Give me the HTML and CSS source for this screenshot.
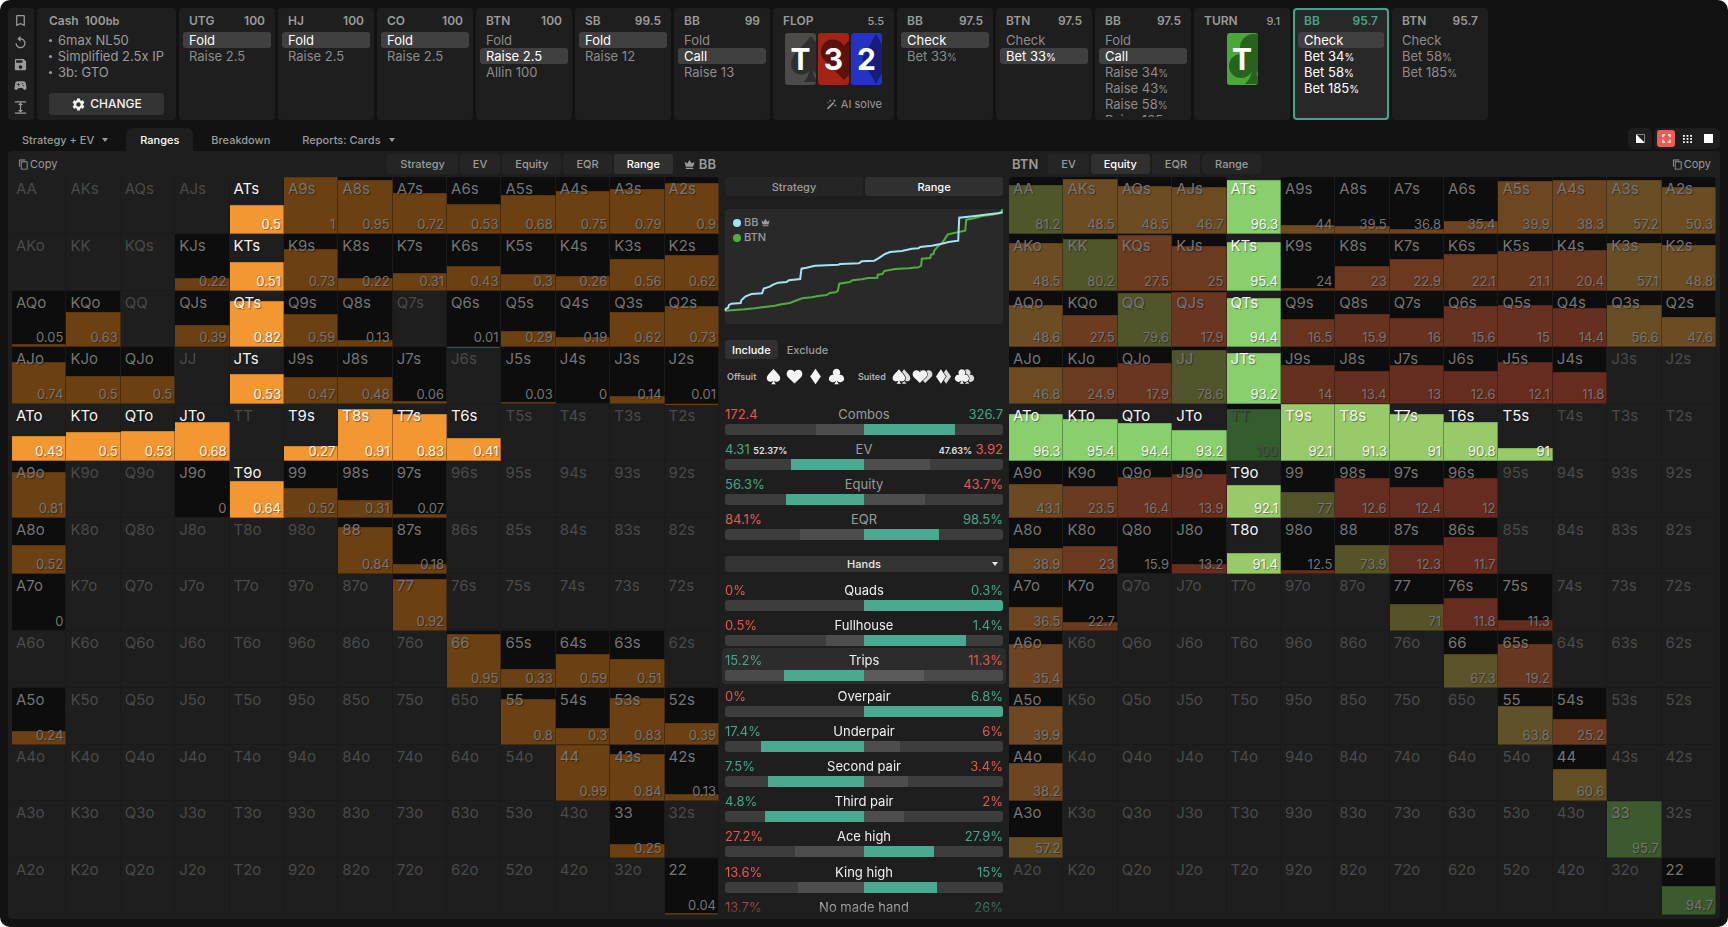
FILE: index.html
```html
<!DOCTYPE html>
<html lang="en">
<head>
<meta charset="utf-8">
<title>Range explorer</title>
<meta name="viewport" content="width=device-width, initial-scale=1">
<link rel="stylesheet" href="styles.css">
</head>
<body>
<svg class="sprite" aria-hidden="true">
  <symbol id="i-bookmark" viewBox="0 0 24 24"><path d="M17 3H7c-1.1 0-2 .9-2 2v16l7-3 7 3V5c0-1.1-.9-2-2-2zm0 15-5-2.18L7 18V5h10v13z"/></symbol>
  <symbol id="i-replay" viewBox="0 0 24 24"><path d="M12 5V1L7 6l5 5V7c3.31 0 6 2.69 6 6s-2.69 6-6 6-6-2.69-6-6H4c0 4.42 3.58 8 8 8s8-3.58 8-8-3.58-8-8-8z"/></symbol>
  <symbol id="i-save" viewBox="0 0 24 24"><path d="M17 3H5c-1.11 0-2 .9-2 2v14c0 1.1.89 2 2 2h14c1.1 0 2-.9 2-2V7l-4-4zm-5 16c-1.66 0-3-1.34-3-3s1.34-3 3-3 3 1.34 3 3-1.34 3-3 3zm3-10H5V5h10v4z"/></symbol>
  <symbol id="i-gamepad" viewBox="0 0 24 24"><path d="M21.58 16.09l-1.09-7.66C20.21 6.46 18.52 5 16.53 5H7.47C5.48 5 3.79 6.46 3.51 8.43l-1.09 7.66C2.2 17.63 3.39 19 4.94 19c.68 0 1.32-.27 1.8-.75L9 16h6l2.25 2.25c.48.48 1.13.75 1.8.75 1.56 0 2.75-1.37 2.53-2.91zM11 11H9v2H8v-2H6v-1h2V8h1v2h2v1zm4-1c-.55 0-1-.45-1-1s.45-1 1-1 1 .45 1 1-.45 1-1 1zm2 3c-.55 0-1-.45-1-1s.45-1 1-1 1 .45 1 1-.45 1-1 1z"/></symbol>
  <symbol id="i-expand" viewBox="0 0 24 24"><path d="M3 20h18v2H3zM3 2h18v2H3zm10 6h3l-4-4-4 4h3v8H8l4 4 4-4h-3z"/></symbol>
  <symbol id="i-gear" viewBox="0 0 24 24"><path d="M19.14 12.94c.04-.3.06-.61.06-.94 0-.32-.02-.64-.07-.94l2.03-1.58c.18-.14.23-.41.12-.61l-1.92-3.32c-.12-.22-.37-.29-.59-.22l-2.39.96c-.5-.38-1.03-.7-1.62-.94l-.36-2.54c-.04-.24-.24-.41-.48-.41h-3.84c-.24 0-.43.17-.47.41l-.36 2.54c-.59.24-1.13.57-1.62.94l-2.39-.96c-.22-.08-.47 0-.59.22L2.74 8.87c-.12.21-.08.47.12.61l2.03 1.58c-.05.3-.09.63-.09.94s.02.64.07.94l-2.03 1.58c-.18.14-.23.41-.12.61l1.92 3.32c.12.22.37.29.59.22l2.39-.96c.5.38 1.03.7 1.62.94l.36 2.54c.05.24.24.41.48.41h3.84c.24 0 .44-.17.47-.41l.36-2.54c.59-.24 1.13-.56 1.62-.94l2.39.96c.22.08.47 0 .59-.22l1.92-3.32c.12-.22.07-.47-.12-.61l-2.01-1.58zM12 15.6c-1.98 0-3.6-1.62-3.6-3.6s1.62-3.6 3.6-3.6 3.6 1.62 3.6 3.6-1.62 3.6-3.6 3.6z"/></symbol>
  <symbol id="i-copy" viewBox="0 0 24 24"><path d="M16 1H4c-1.1 0-2 .9-2 2v14h2V3h12V1zm3 4H8c-1.1 0-2 .9-2 2v14c0 1.1.9 2 2 2h11c1.1 0 2-.9 2-2V7c0-1.1-.9-2-2-2zm0 16H8V7h11v14z"/></symbol>
  <symbol id="i-crown" viewBox="0 0 24 24"><path d="M4 17 1 6l6 4 5-8 5 8 6-4-3 11zM4 19h16v3H4z"/></symbol>
  <symbol id="i-wand" viewBox="0 0 24 24"><path d="M2 20 15.500 6.500l2.500 2.500L4.500 22.500zM18 1l3 3-2.500 2.500-3-3zM9 1l.9 2.100L12 4l-2.100.9L9 7l-.9-2.100L6 4l2.100-.9zM20 11l.9 2.100L23 14l-2.100.9L20 17l-.9-2.100L17 14l2.100-.9zM4 6l.6 1.400L6 8l-1.400.6L4 10l-.6-1.400L2 8l1.400-.6z"/></symbol>
  <symbol id="i-spade" viewBox="0 0 24 24"><path d="M12 1C9 5.500 2.500 9.500 2.500 14.500c0 3 2.300 4.900 4.800 4.900 1.700 0 3-.7 3.800-1.800-.2 1.900-1 3.900-2.700 5.400h7.200c-1.700-1.500-2.500-3.500-2.700-5.400.8 1.100 2.100 1.800 3.800 1.800 2.500 0 4.800-1.900 4.800-4.900C21.500 9.500 15 5.500 12 1z"/></symbol>
  <symbol id="i-heart" viewBox="0 0 24 24"><path d="M12 22 2.500 12.600C-.8 8.800 1.400 2.600 6.600 2.600c2.300 0 4.300 1.200 5.400 3.200 1.100-2 3.100-3.200 5.400-3.200 5.200 0 7.400 6.200 4.100 10z"/></symbol>
  <symbol id="i-diamond" viewBox="0 0 24 24"><path d="M12 1l7.500 11L12 23 4.500 12z"/></symbol>
  <symbol id="i-club" viewBox="0 0 24 24"><path d="M12 1a5.300 5.300 0 0 1 4.100 8.600 5.300 5.300 0 1 1-3.200 8c.1 2.100.9 4 2.600 5.400h-7c1.700-1.400 2.500-3.300 2.600-5.400a5.300 5.300 0 1 1-3.200-8A5.300 5.300 0 0 1 12 1z"/></symbol>
</svg>

<div class="app">
  <header class="history">
    <nav class="panel tools" aria-label="Tools">
      <button class="icon-btn" aria-label="Bookmark"><svg><use href="#i-bookmark"/></svg></button>
      <button class="icon-btn" aria-label="Reset"><svg><use href="#i-replay"/></svg></button>
      <button class="icon-btn" aria-label="Save"><svg><use href="#i-save"/></svg></button>
      <button class="icon-btn" aria-label="Trainer"><svg><use href="#i-gamepad"/></svg></button>
      <button class="icon-btn" aria-label="Collapse"><svg><use href="#i-expand"/></svg></button>
    </nav>
    <section class="panel cash">
      <h2 class="cash-title">Cash&nbsp; 100<small>bb</small></h2>
      <ul class="cash-list"><li>6max NL50</li><li>Simplified 2.5x IP</li><li>3b: GTO</li></ul>
      <button class="change"><svg><use href="#i-gear"/></svg>CHANGE</button>
    </section>
    <section class="panel spot"><h2><span>UTG</span><span>100</span></h2><div class="acts"><button class="on">Fold</button><button>Raise 2.5</button></div></section>
    <section class="panel spot"><h2><span>HJ</span><span>100</span></h2><div class="acts"><button class="on">Fold</button><button>Raise 2.5</button></div></section>
    <section class="panel spot"><h2><span>CO</span><span>100</span></h2><div class="acts"><button class="on">Fold</button><button>Raise 2.5</button></div></section>
    <section class="panel spot"><h2><span>BTN</span><span>100</span></h2><div class="acts"><button>Fold</button><button class="on">Raise 2.5</button><button>Allin 100</button></div></section>
    <section class="panel spot"><h2><span>SB</span><span>99.5</span></h2><div class="acts"><button class="on">Fold</button><button>Raise 12</button></div></section>
    <section class="panel spot"><h2><span>BB</span><span>99</span></h2><div class="acts"><button>Fold</button><button class="on">Call</button><button>Raise 13</button></div></section>
    <section class="panel board flop">
      <h2><span>FLOP</span><small>5.5</small></h2>
      <div class="cards">
        <div class="card s"><svg><use href="#i-spade"/></svg><b>T</b></div>
        <div class="card h"><svg><use href="#i-heart"/></svg><b>3</b></div>
        <div class="card d"><svg viewBox="0 0 24 48" preserveAspectRatio="none"><path d="M12 0l12 24-12 24L0 24z"/></svg><b>2</b></div>
      </div>
      <button class="solve"><svg><use href="#i-wand"/></svg>AI solve</button>
    </section>
    <section class="panel spot"><h2><span>BB</span><span>97.5</span></h2><div class="acts"><button class="on">Check</button><button>Bet 33<small>%</small></button></div></section>
    <section class="panel spot"><h2><span>BTN</span><span>97.5</span></h2><div class="acts"><button>Check</button><button class="on">Bet 33<small>%</small></button></div></section>
    <section class="panel spot"><h2><span>BB</span><span>97.5</span></h2><div class="acts"><button>Fold</button><button class="on">Call</button><button>Raise 34<small>%</small></button><button>Raise 43<small>%</small></button><button>Raise 58<small>%</small></button><button>Raise 185<small>%</small></button></div></section>
    <section class="panel board">
      <h2><span>TURN</span><small>9.1</small></h2>
      <div class="cards"><div class="card c"><svg viewBox="0 0 50 50"><circle cx="25" cy="14" r="14"/><circle cx="12" cy="32" r="12"/><circle cx="38" cy="32" r="12"/><path d="M20 20h10v12h-3c0 8 2 13 7 18H16c5-5 7-10 7-18h-3z"/></svg><b>T</b></div></div>
    </section>
    <section class="panel spot current"><h2><span>BB</span><span>95.7</span></h2><div class="acts"><button class="on">Check</button><button>Bet 34<small>%</small></button><button>Bet 58<small>%</small></button><button>Bet 185<small>%</small></button></div></section>
    <section class="panel spot"><h2><span>BTN</span><span>95.7</span></h2><div class="acts"><button>Check</button><button>Bet 58<small>%</small></button><button>Bet 185<small>%</small></button></div></section>
  </header>

  <div class="tabbar">
    <nav class="tabs">
      <button class="tab">Strategy + EV<i class="caret"></i></button>
      <button class="tab active">Ranges</button>
      <button class="tab">Breakdown</button>
      <button class="tab">Reports: Cards<i class="caret"></i></button>
    </nav>
    <div class="views">
      <div class="view-group"><button aria-label="Split colours"><svg viewBox="0 0 10 10"><path d="M0 0v10h10z"/><path d="M1 .5h8.500v8.500" fill="none" stroke="#999"/></svg></button></div>
      <div class="view-group">
        <button class="red" aria-label="Full matrix"><svg viewBox="0 0 10 10"><path d="M1 3.500V1h2.500M6.500 1H9v2.500M9 6.500V9H6.500M3.500 9H1V6.500" fill="none" stroke="#fff" stroke-width="1.400"/></svg></button>
        <button aria-label="Dots"><svg viewBox="0 0 10 10"><path d="M0 1h2v2H0zM4 1h2v2H4zM8 1h2v2H8zM0 4.500h2v2H0zM4 4.500h2v2H4zM8 4.500h2v2H8zM0 8h2v2H0zM4 8h2v2H4zM8 8h2v2H8z"/></svg></button>
        <button aria-label="Solid"><svg viewBox="0 0 10 10"><path d="M0 0h10v10H0z"/></svg></button>
      </div>
    </div>
  </div>

  <main class="main">
    <section class="side">
      <div class="side-head">
        <button class="copy"><svg><use href="#i-copy"/></svg>Copy</button>
        <div class="pills push"><button>Strategy</button><button>EV</button><button>Equity</button><button>EQR</button><button class="on">Range</button></div>
        <h3><svg><use href="#i-crown"/></svg>BB</h3>
      </div>
      <table class="matrix" id="bb" aria-label="BB range"></table>
    </section>

    <section class="center">
      <div class="seg"><button>Strategy</button><button class="on">Range</button></div>
      <div class="chart">
        <svg viewBox="31 117 832 345" preserveAspectRatio="none" aria-label="Equity distribution">
          <path class="ln btn-ln" d="M31 422L60 420L90 418L120 415L150 411L180 407L200 403L225 399L240 393L262 385L290 382L310 378L335 375L345 369L362 367L369 362L373 341L405 336L412 331L440 328L460 324L487 323L488 314L502 312L508 303L520 301L540 297L580 295L610 292L618 287L620 266L645 264L648 254L655 252L657 243L667 230L680 219L688 208L698 193L720 188L750 182L753 149L780 144L800 138L830 134L858 127L861 117"/>
          <path class="ln bb-ln" d="M31 422L34 416L40 414L43 405L50 401L78 399L80 391L87 384L93 379L110 372L142 370L147 356L165 350L175 344L190 338L215 336L222 331L256 327L260 296L275 293L300 287L370 284L375 282L432 280L440 274L478 272L490 265L510 252L525 246L560 243L590 236L610 235L615 231L650 227L680 221L700 216L729 212L732 143L780 138L820 133L850 130L862 127"/>
        </svg>
        <ul class="legend"><li class="l-bb">BB<svg><use href="#i-crown"/></svg></li><li class="l-btn">BTN</li></ul>
      </div>
      <div class="filter"><button class="on">Include</button><button>Exclude</button></div>
      <div class="suits">
        <span class="suit-label">Offsuit</span>
        <button aria-label="Spades"><svg viewBox="0 0 24 24"><use href="#i-spade"/></svg></button>
        <button aria-label="Hearts"><svg viewBox="0 0 24 24"><use href="#i-heart"/></svg></button>
        <button aria-label="Diamonds"><svg viewBox="0 0 24 24"><use href="#i-diamond"/></svg></button>
        <button aria-label="Clubs"><svg viewBox="0 0 24 24"><use href="#i-club"/></svg></button>
        <span class="suit-label second">Suited</span>
        <button aria-label="Suited spades"><svg class="dbl" viewBox="0 0 32 24"><use class="back" href="#i-spade" x="8" width="24" height="24"/><use class="gap" href="#i-spade" width="24" height="24"/></svg></button>
        <button aria-label="Suited hearts"><svg class="dbl" viewBox="0 0 32 24"><use class="back" href="#i-heart" x="8" width="24" height="24"/><use class="gap" href="#i-heart" width="24" height="24"/></svg></button>
        <button aria-label="Suited diamonds"><svg class="dbl" viewBox="0 0 32 24"><use class="back" href="#i-diamond" x="8" width="24" height="24"/><use class="gap" href="#i-diamond" width="24" height="24"/></svg></button>
        <button aria-label="Suited clubs"><svg class="dbl" viewBox="0 0 32 24"><use class="back" href="#i-club" x="8" width="24" height="24"/><use class="gap" href="#i-club" width="24" height="24"/></svg></button>
      </div>
      <div class="stats totals" id="totals"></div>
      <div class="hands"><select aria-label="Group by"><option>Hands</option><option>Draws</option></select><i class="caret"></i></div>
      <div class="stats hands-list" id="hands"></div>
    </section>

    <section class="side">
      <div class="side-head">
        <h3>BTN</h3>
        <div class="pills"><button>EV</button><button class="on">Equity</button><button>EQR</button><button>Range</button></div>
        <button class="copy push"><svg><use href="#i-copy"/></svg>Copy</button>
      </div>
      <table class="matrix" id="btn" aria-label="BTN equity"></table>
    </section>
  </main>
</div>
<script src="app.js"></script>
</body>
</html>
```

FILE: styles.css
```css
* { box-sizing: border-box; }
body { margin: 0; background: #fff; font-family: Inter, "Liberation Sans", sans-serif; font-size: 13px; color: #9b9b9b; }
button, select { font: inherit; color: inherit; background: none; border: 0; padding: 0; margin: 0; cursor: pointer; }
h2, h3, ul { margin: 0; padding: 0; font-size: inherit; }
ul { list-style: none; }
svg { fill: currentColor; display: block; }
.sprite { position: absolute; width: 0; height: 0; }
.push { margin-left: auto; }

.app { min-height: 100vh; display: flex; flex-direction: column; padding: 8px; background: #121212; border-radius: 10px; overflow: hidden; }

.history { display: flex; gap: 3px; }
.panel { background: #1e1e1e; border-radius: 4px; padding: 5px 4px 5px; flex: none; line-height: 16px; display: flex; flex-direction: column; }
.panel h2 { display: flex; justify-content: space-between; font-size: 12px; font-weight: 600; line-height: 16px; padding: 0 6px; margin-bottom: 3px; }
.panel h2 small { font-size: 11px; font-weight: 500; }
.tools { width: 26px; align-items: center; justify-content: space-between; padding: 5px 2px 5px 0; }
.icon-btn svg { width: 15px; height: 15px; }
.cash { width: 139px; padding: 5px 12px; }
.panel .cash-title { display: block; padding: 0; }
.panel .cash-title small { font-weight: 600; font-size: 11px; }
.cash-list li { display: flex; align-items: center; gap: 6px; white-space: nowrap; }
.cash-list li::before { content: ""; width: 3px; height: 3px; border-radius: 50%; background: currentColor; }
.change { margin-top: 13px; height: 22px; border-radius: 3px; background: #333; color: #f2f2f2; display: flex; align-items: center; justify-content: center; gap: 4px; font-size: 12px; font-weight: 500; }
.change svg { width: 15px; height: 15px; }

.spot { width: 96px; padding-bottom: 3px; }
.acts { flex: 1 1 0; min-height: 0; overflow: hidden; display: flex; flex-direction: column; }
.acts button { flex: none; height: 16px; line-height: 16px; padding: 0 6px; text-align: left; border-radius: 3px; color: #8c8c8c; }
.acts small { font-size: 10px; }
.acts .on { background: #404040; color: #fff; }
.current { padding-left: 5px; padding-right: 5px; background: #282828; box-shadow: inset 0 0 0 2px #45a58b; }
.current h2 { color: #45a58b; }
.current .acts button { color: #fff; }
.board { width: 96px; }
.flop { width: 121px; }
.cards { display: flex; gap: 2px; justify-content: center; padding-top: 1px; }
.card { position: relative; width: 31px; height: 52px; border-radius: 3px; overflow: hidden; display: grid; place-items: center; color: #fff; font-size: 30px; }
.card svg { position: absolute; left: 2px; top: 1px; width: 50px; height: 50px; }
.card b { position: relative; font-weight: 700; }
.s { background: #4d4a4a; } .s svg { color: #2f2d2d; left: 1px; }
.h { background: #a32314; } .h svg { color: #5c120a; left: 1px; }
.d { background: #2433c4; } .d svg { color: #171e7a; left: 11px; width: 28px; }
.c { background: #4aa83a; } .c svg { color: #28621f; }
.solve { margin: auto 8px 3px auto; display: flex; align-items: center; gap: 4px; font-size: 11px; line-height: 16px; }
.solve svg { width: 11px; height: 11px; }

.tabbar { display: flex; justify-content: space-between; align-items: flex-start; padding-top: 8px; }
.tabs { display: flex; gap: 4px; }
.tab { height: 23px; padding: 0 14px; font-size: 11px; font-weight: 500; display: flex; align-items: center; gap: 8px; border-radius: 6px 6px 0 0; }
.tab.active { background: #1e1e1e; color: #fff; }
.caret { width: 0; height: 0; border: 3px solid transparent; border-top: 4px solid; border-bottom: 0; }
.views { display: flex; gap: 2px; }
.view-group { display: flex; gap: 3px; padding: 2px 3px; background: #1e1e1e; border-radius: 5px; color: #fff; }
.view-group button { width: 18px; height: 17px; display: grid; place-items: center; border-radius: 3px; }
.view-group svg { width: 9px; height: 9px; }
.view-group .red { background: #e85d56; }

.main { flex: 1; display: grid; grid-template-columns: 1fr 290px 1fr; background: #1e1e1e; border-radius: 4px; padding: 0 4px 4px; }
.side { display: flex; flex-direction: column; min-width: 0; }
.side-head { height: 26px; display: flex; align-items: center; padding: 0 3px 0 6px; font-size: 12px; }
.side-head h3 { display: flex; align-items: center; gap: 4px; font-size: 13px; font-weight: 600; margin: 0 0 0 11px; }
.side-head h3:first-child { margin: 0 10px 0 -3px; }
.side-head h3 svg { width: 11px; height: 11px; }
.copy { display: flex; align-items: center; gap: 1px; font-size: 11px; }
.copy svg { width: 11px; height: 11px; }
.side-head .copy:last-child { margin-right: 2px; }
.pills { display: flex; gap: 2px; }
.pills.push { margin-left: auto; }
.pills button { height: 20px; padding: 0 13px; background: #252525; border-radius: 3px; font-size: 11px; font-weight: 500; }
.pills .on, .seg .on, .filter .on { background: #303030; color: #fff; }

.matrix { flex: 1; display: grid; grid-template: repeat(13, 1fr) / repeat(13, 1fr); border-radius: 4px; overflow: hidden; }
.matrix tbody, .matrix tr { display: contents; }
.cell { position: relative; padding: 0; min-width: 0; color: #4a4a4a; box-shadow: inset -1px -1px #1a1a1a; }
.cell .fill { position: absolute; left: 0; right: 0; bottom: 0; box-shadow: inset -1px -1px rgba(0, 0, 0, .3), inset 0 1px rgba(0, 0, 0, .15); }
.cell .name { position: absolute; left: 4px; top: 2px; font-size: 15px; line-height: 20px; }
.cell .num { position: absolute; right: 3px; bottom: 2px; font-size: 13px; line-height: 16px; }
.dim { background: #0d0d0d; color: #757575; }
.lit { color: #f5f5f5; }
.dim .name, .dim .num, .lit .name, .lit .num { text-shadow: 1px 1px 1px rgba(0, 0, 0, .4); }
.blocked { color: #4c5049; }

.center { display: flex; flex-direction: column; padding: 26px 6px 0; min-width: 0; }
.seg { display: grid; grid-template-columns: 1fr 1fr; gap: 2px; }
.seg button { height: 19px; background: #252525; border-radius: 3px; font-size: 11px; font-weight: 500; }
.chart { position: relative; margin-top: 13px; height: 115px; background: #292929; border-radius: 4px; }
.chart > svg { width: 100%; height: 100%; overflow: visible; }
.ln { fill: none; stroke-width: 2px; vector-effect: non-scaling-stroke; }
.bb-ln { stroke: #a5e3f2; } .btn-ln { stroke: #4fae3d; }
.legend { position: absolute; left: 8px; top: 6px; font-size: 11px; font-weight: 500; line-height: 15px; }
.legend li { display: flex; align-items: center; gap: 3px; }
.legend li::before { content: ""; width: 8px; height: 8px; border-radius: 50%; background: #a5e3f2; }
.legend .l-btn::before { background: #4fae3d; }
.legend svg { width: 9px; height: 9px; }
.filter { display: flex; gap: 2px; margin-top: 16px; }
.filter button { height: 19px; padding: 0 7px; border-radius: 3px; font-size: 11px; font-weight: 500; }
.suits { display: flex; align-items: center; margin-top: 6px; height: 22px; color: #f5f5f5; }
.suits button { width: 21px; display: grid; place-items: center; }
.suits svg { width: 17px; height: 17px; }
.suits .dbl { width: 21px; }
.suits .gap { stroke: #1e1e1e; stroke-width: 2px; paint-order: stroke; }
.suits .back { color: #dcdcdc; }
.suit-label { width: 38px; padding-left: 2px; font-size: 9px; font-weight: 600; color: #b0b0b0; }
.second { width: 44px; padding-left: 11px; }

.totals { margin-top: 15px; }
.stat { display: flex; flex-direction: column; padding: 2px 3px 0; margin: 0 -3px; border-radius: 4px; min-height: 0; overflow: hidden; height: 35px; }
.stat-top { display: grid; grid-template-columns: 1fr auto 1fr; line-height: 20px; height: 20px; flex: none; font-size: 13px; }
.stat-top span:last-child { text-align: right; }
.stat-top small { font-size: 9px; font-weight: 600; color: #e0e0e0; }
.win { color: #46a58b; } .lose { color: #e65852; }
.bar { display: grid; grid-template-columns: 1fr 1fr; height: 11px; background: #3d3d3d; border-radius: 3px; overflow: hidden; flex: none; }
.bar i { display: block; height: 100%; background: #4d4d4d; }
.bar i:first-child { justify-self: end; }
.hover .bar { background: #4a4a4a; }
.hover .bar i { background: #5a5a5a; }
.bar i.best, .hover .bar i.best { background: #4aaa8f; }
.hands { position: relative; margin-top: 14px; color: #e8e8e8; }
.hands select { display: block; width: 100%; height: 16px; appearance: none; background: #333; border-radius: 3px; text-align-last: center; font-size: 11px; font-weight: 500; }
.hands .caret { position: absolute; right: 5px; top: 6px; }
.hands-list { flex: 1 1 0; min-height: 0; margin: 6px -3px 0; overflow: hidden; display: grid; grid-template-rows: repeat(9, 7fr) 4fr; padding: 0 3px; -webkit-mask-image: linear-gradient(#000 94%, rgba(0, 0, 0, .3)); mask-image: linear-gradient(#000 94%, rgba(0, 0, 0, .3)); }
.hands-list .stat { height: auto; color: #f0f0f0; }
.hands-list .hover { background: #2c2c2c; }
```

FILE: app.js
```js
const RANKS = 'AKQJT98765432'.split('');

// hand: [value, fill height]; a single number uses the value as the height
const BB = {
  ATs: .5, A9s: 1, A8s: .95, A7s: .72, A6s: .53, A5s: .68, A4s: .75, A3s: .79, A2s: .9,
  KJs: .22, KTs: .51, K9s: .73, K8s: .22, K7s: .31, K6s: .43, K5s: .3, K4s: .26, K3s: .56, K2s: .62,
  AQo: .05, KQo: .63, QJs: .39, QTs: .82, Q9s: .59, Q8s: .13, Q6s: .01, Q5s: .29, Q4s: .19, Q3s: .62, Q2s: .73,
  AJo: .74, KJo: .5, QJo: .5, JTs: .53, J9s: .47, J8s: .48, J7s: .06, J5s: .03, J4s: 0, J3s: .14, J2s: .01,
  ATo: .43, KTo: .5, QTo: .53, JTo: .68, T9s: .27, T8s: .91, T7s: .83, T6s: .41,
  A9o: .81, J9o: 0, T9o: .64, 99: .52, '98s': .31, '97s': .07,
  A8o: .52, 88: .84, '87s': .18, A7o: 0, 77: .92,
  66: .95, '65s': .33, '64s': .59, '63s': .51,
  A5o: .24, 55: .8, '54s': .3, '53s': .83, '52s': .39,
  44: .99, '43s': .84, '42s': .13, 33: .25, 22: .04
};
const BTN = {
  AA: [81.2, .86], AKs: [48.5, .97], AQs: [48.5, .84], AJs: [46.7, .83], ATs: [96.3, .95], A9s: [44, .16], A8s: [39.5, .14], A7s: [36.8, .08], A6s: [35.4, .22], A5s: [39.9, .93], A4s: [38.3, .95], A3s: [57.2, .95], A2s: [50.3, .82],
  AKo: [48.5, .83], KK: [80.2, .91], KQs: [27.5, .98], KJs: [25, .79], KTs: [95.4, .85], K9s: [24, .05], K8s: [23, .43], K7s: [22.9, .55], K6s: [22.1, .64], K5s: [21.1, .7], K4s: [20.4, .71], K3s: [57.1, .83], K2s: [48.8, .8],
  AQo: [48.6, .74], KQo: [27.5, .57], QQ: [79.6, .95], QJs: [17.9, .98], QTs: [94.4, .86], Q9s: [16.5, .49], Q8s: [15.9, .58], Q7s: [16, .51], Q6s: [15.6, .72], Q5s: [15, .74], Q4s: [14.4, .69], Q3s: [56.6, .75], Q2s: [47.6, .53],
  AJo: [46.8, .66], KJo: [24.9, .65], QJo: [17.9, .72], JJ: [78.6, .96], JTs: [93.2, .9], J9s: [14, .68], J8s: [13.4, .58], J7s: [13, .68], J6s: [12.6, .59], J5s: [12.1, .75], J4s: [11.8, .56],
  ATo: [96.3, .82], KTo: [95.4, .73], QTo: [94.4, .66], JTo: [93.2, .54], TT: [100, .91], T9s: [92.1, 1], T8s: [91.3, 1], T7s: [91, .82], T6s: [90.8, .68], T5s: [91, .22],
  A9o: [43.1, .59], K9o: [23.5, .56], Q9o: [16.4, .72], J9o: [13.9, .76], T9o: [92.1, .58], 99: [77, .45], '98s': [12.6, .69], '97s': [12.4, .54], '96s': [12, .69],
  A8o: [38.9, .46], K8o: [23, .5], Q8o: [15.9, 0], J8o: [13.2, .18], T8o: [91.4, .38], '98o': [12.5, .07], 88: [73.9, .51], '87s': [12.3, .51], '86s': [11.7, .65],
  A7o: [36.5, .43], K7o: [22.7, .17], 77: [71, .47], '76s': [11.8, .59], '75s': [11.3, .2],
  A6o: [35.4, .77], 66: [67.3, .59], '65s': [19.2, .77],
  A5o: [39.9, .68], 55: [63.8, .68], '54s': [25.2, .46],
  A4o: [38.2, .68], 44: [60.6, .57], A3o: [57.2, .37], 33: [95.7, 1], 22: [94.7, .51]
};

const STOPS = [[10, 100, 40, 31], [13, 101, 46, 31], [18, 104, 54, 33], [27, 107, 60, 32], [38, 109, 70, 33], [48, 108, 76, 34], [57, 104, 78, 36], [67, 92, 82, 40], [77, 83, 83, 42], [81, 79, 86, 42], [95, 61, 90, 46], [100, 51, 92, 47]];

function equityColor(v, lit) {
  if (lit) return v > 93 ? '#89cf6e' : '#98ca69';
  const k = Math.max(1, STOPS.findIndex(s => s[0] >= v));
  const a = STOPS[k - 1], b = STOPS[k];
  const t = (v - a[0]) / (b[0] - a[0]);
  return 'rgb(' + [1, 2, 3].map(n => Math.round(a[n] + (b[n] - a[n]) * t)).join(',') + ')';
}

function drawMatrix(id, data, color) {
  let html = '';
  RANKS.forEach((r, i) => {
    html += '<tr>';
    RANKS.forEach((c, j) => {
      const hand = i === j ? r + r : j > i ? r + c + 's' : c + r + 'o';
      const entry = data[hand];
      if (entry === undefined) {
        html += `<td class="cell"><span class="name">${hand}</span></td>`;
        return;
      }
      const [value, height] = Array.isArray(entry) ? entry : [entry, entry];
      const lit = hand.includes('T') && i !== j;
      const cls = lit ? 'lit' : hand === 'TT' ? 'dim blocked' : 'dim';
      html += `<td class="cell ${cls}"><i class="fill" style="height:${Math.round(height * 100)}%;background-color:${color(value, lit)}"></i><span class="name">${hand}</span><span class="num">${value}</span></td>`;
    });
    html += '</tr>';
  });
  document.getElementById(id).innerHTML = '<tbody>' + html + '</tbody>';
}

// label, left text, left bar %, right text, right bar %, left note, right note
const TOTALS = [
  ['Combos', '172.4', 34.6, '326.7', 65.6],
  ['EV', '4.31', 52.4, '3.92', 47.6, '52.37%', '47.63%'],
  ['Equity', '56.3%', 56.3, '43.7%', 43.7],
  ['EQR', '84.1%', 46, '98.5%', 54]
];
const HANDS = [
  ['Quads', '0%', 0, '0.3%', 100], ['Fullhouse', '0.5%', 27.4, '1.4%', 73.3],
  ['Trips', '15.2%', 57.5, '11.3%', 43], ['Overpair', '0%', 0, '6.8%', 100],
  ['Underpair', '17.4%', 74.3, '6%', 26], ['Second pair', '7.5%', 69, '3.4%', 31.5],
  ['Third pair', '4.8%', 71, '2%', 29], ['Ace high', '27.2%', 49.7, '27.9%', 50.5],
  ['King high', '13.6%', 47.6, '15%', 52.6], ['No made hand', '13.7%', 34, '26%', 66]
];

function drawStats(id, rows) {
  document.getElementById(id).innerHTML = rows.map(([label, l, lw, r, rw, ln, rn]) => {
    const left = lw > rw;
    return `<div class="stat${label === 'Trips' ? ' hover' : ''}"><div class="stat-top">
      <span class="${left ? 'win' : 'lose'}">${l}${ln ? ` <small>${ln}</small>` : ''}</span><span>${label}</span>
      <span class="${left ? 'lose' : 'win'}">${rn ? `<small>${rn}</small> ` : ''}${r}</span></div>
      <div class="bar"><i class="${left ? 'best' : ''}" style="width:${lw}%"></i><i class="${left ? '' : 'best'}" style="width:${rw}%"></i></div></div>`;
  }).join('');
}

drawMatrix('bb', BB, (v, lit) => lit ? '#f29732' : '#6b4012');
drawMatrix('btn', BTN, equityColor);
drawStats('totals', TOTALS);
drawStats('hands', HANDS);
```
